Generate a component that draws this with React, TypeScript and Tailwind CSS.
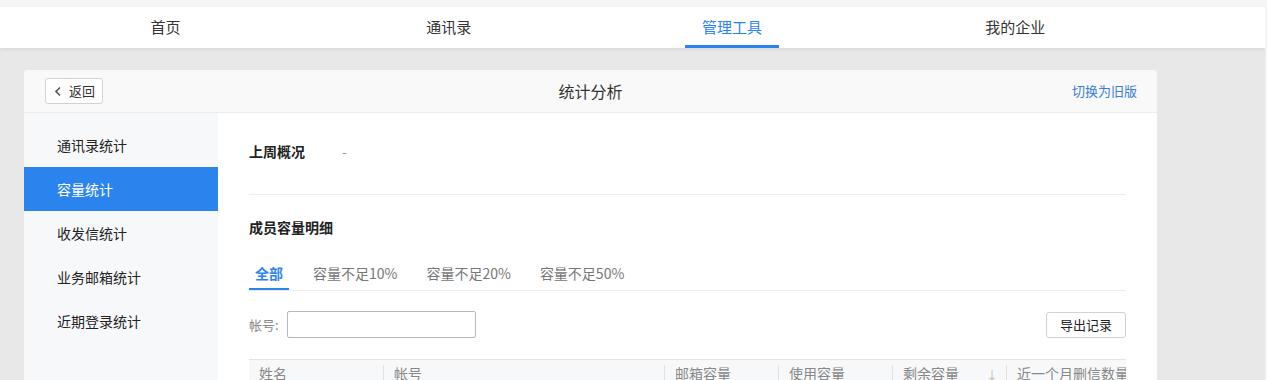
import React from 'react';

const navItems = ['首页', '通讯录', '管理工具', '我的企业'];
const sideItems = ['通讯录统计', '容量统计', '收发信统计', '业务邮箱统计', '近期登录统计'];
const tabs = ['全部', '容量不足10%', '容量不足20%', '容量不足50%'];

const columns = [
  { label: '姓名', w: 'w-[134px] shrink-0' },
  { label: '帐号', w: 'w-[281px] shrink-0' },
  { label: '邮箱容量', w: 'w-[114px] shrink-0' },
  { label: '使用容量', w: 'w-[114px] shrink-0' },
  { label: '剩余容量', w: 'w-[114px] shrink-0', sort: true },
  { label: '近一个月删信数量', w: 'flex-1 min-w-0 overflow-hidden' },
];

export default function App() {
  return (
    <div
      className="h-[380px] overflow-hidden bg-[#e8e8e8] text-[#333] border-r-2 border-[#f4f4f4]"
      style={{ fontFamily: '"Noto Sans CJK SC", "Microsoft YaHei", sans-serif' }}
    >
      {/* 顶部导航 */}
      <div className="h-[7px] bg-[#f5f5f5]" />
      <div className="bg-white h-[41px] shadow-[0_2px_3px_rgba(0,0,0,0.06)] relative z-10">
        <div className="ml-[24px] w-[1133px] grid grid-cols-4 h-full">
          {navItems.map((n, i) => (
            <div key={n} className="flex justify-center h-full">
              <div
                className={
                  i === 2
                    ? 'w-[94px] flex items-center justify-center text-[15px] text-[#2b84ee] border-b-[3px] border-[#2b84ee] pt-[3px]'
                    : 'flex items-center justify-center text-[15px] text-[#333]'
                }
              >
                {n}
              </div>
            </div>
          ))}
        </div>
      </div>

      {/* 主卡片 */}
      <div className="pt-[22px] pl-[24px]">
        <div className="w-[1133px] bg-white rounded-t-[4px] overflow-hidden">
          <div className="h-[43px] bg-[#f9f9f9] border-b border-[#ececec] flex items-center justify-between pl-[21px] pr-[20px] relative">
            <button className="h-[26px] w-[58px] bg-white border border-[#d2d2d2] rounded-[3px] flex items-center pl-[8px] gap-[7px] text-[13px] text-[#333]">
              <svg width="8" height="11" viewBox="0 0 8 11" fill="none">
                <path d="M6 1.5L2 5.5L6 9.5" stroke="#555" strokeWidth="1.6" />
              </svg>
              返回
            </button>
            <div className="absolute left-1/2 -translate-x-1/2 text-[16px] text-[#333]">统计分析</div>
            <span className="text-[13px] text-[#3a80dc]">切换为旧版</span>
          </div>

          <div className="flex">
            {/* 侧栏 */}
            <div className="w-[194px] shrink-0 bg-[#f7f8fa] pt-[10px] h-[300px]">
              {sideItems.map((s, i) => (
                <div
                  key={s}
                  className={
                    i === 1
                      ? 'h-[44px] flex items-center pl-[33px] text-[14px] bg-[#2b84ee] text-white'
                      : 'h-[44px] flex items-center pl-[33px] text-[14px] text-[#222]'
                  }
                >
                  {s}
                </div>
              ))}
            </div>

            {/* 内容 */}
            <div className="flex-1 min-w-0 px-[31px] pt-[28px]">
              <div className="flex items-center h-[20px] text-[14px]">
                <span className="font-bold text-[#222] w-[93px]">上周概况</span>
                <span className="text-[#999]">-</span>
              </div>
              <div className="mt-[33px] border-t border-[#eee]" />

              <div className="mt-[22px] h-[20px] flex items-center text-[14px] font-bold text-[#222]">
                成员容量明细
              </div>

              <div className="mt-[26px] flex gap-[19px] border-b border-[#eee]">
                {tabs.map((t, i) => (
                  <div
                    key={t}
                    className={
                      i === 0
                        ? 'px-[6px] pb-[5px] h-[27px] flex items-start text-[14px] font-bold text-[#2b84ee] border-b-2 border-[#2b84ee]'
                        : 'px-[5px] pb-[5px] h-[27px] flex items-start text-[14px] text-[#777]'
                    }
                  >
                    {t}
                  </div>
                ))}
              </div>

              <div className="mt-[20px] flex items-center justify-between">
                <div className="flex items-center">
                  <span className="text-[13px] text-[#888] w-[38px]">帐号:</span>
                  <input className="w-[189px] h-[27px] border border-[#b4b9c0] rounded-[2px] outline-none" />
                </div>
                <button className="w-[80px] h-[26px] border border-[#d2d2d2] rounded-[3px] bg-white text-[13px] text-[#222]">
                  导出记录
                </button>
              </div>

              <div className="mt-[21px] border-t border-[#e4e4e4] bg-[#f7f8fa] h-[40px] flex items-start pt-[3px] text-[14px] text-[#888] whitespace-nowrap">
                {columns.map((c, i) => (
                  <div
                    key={c.label}
                    className={`${c.w} flex items-center h-[20px] mt-[2px] ${i > 0 ? 'border-l border-[#e2e2e2]' : ''} pl-[10px] ${c.sort ? 'pr-[8px]' : 'pr-0'}`}
                  >
                    <span className="flex-1 -mt-[4px]">{c.label}</span>
                    {c.sort && <span className="text-[#bbb] text-[12px]">↓</span>}
                  </div>
                ))}
              </div>
            </div>
          </div>
        </div>
      </div>
    </div>
  );
}
